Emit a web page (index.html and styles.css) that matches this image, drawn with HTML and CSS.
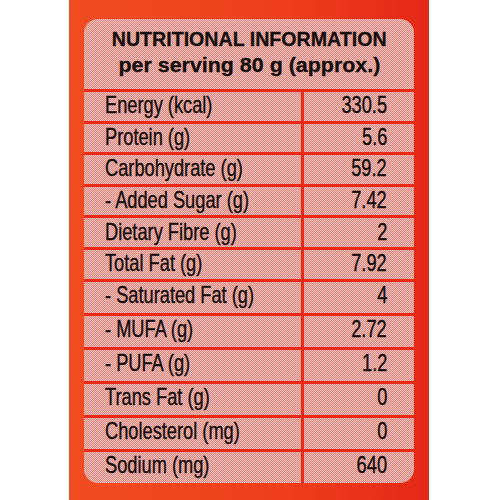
FILE: index.html
```html
<!DOCTYPE html>
<html lang="en">

<head>
  <meta charset="UTF-8">
  <meta name="viewport" content="width=device-width, initial-scale=1.0">
  <title>Nutritional Information</title>
  <link rel="stylesheet" href="styles.css">
</head>

<body>
  <div id="pack">
    <div class="label">
      <div class="label-head">
        <div class="title">NUTRITIONAL INFORMATION</div>
        <div class="subtitle">per serving 80 g (approx.)</div>
      </div>
      <div class="facts">
        <div class="row"><span class="name"><i>Energy (kcal)</i></span><span class="value"><i>330.5</i></span></div>
        <div class="row"><span class="name"><i>Protein (g)</i></span><span class="value"><i>5.6</i></span></div>
        <div class="row"><span class="name"><i>Carbohydrate (g)</i></span><span class="value"><i>59.2</i></span></div>
        <div class="row"><span class="name"><i>- Added Sugar (g)</i></span><span class="value"><i>7.42</i></span></div>
        <div class="row"><span class="name"><i>Dietary Fibre (g)</i></span><span class="value"><i>2</i></span></div>
        <div class="row"><span class="name"><i>Total Fat (g)</i></span><span class="value"><i>7.92</i></span></div>
        <div class="row tall"><span class="name"><i>- Saturated Fat (g)</i></span><span class="value"><i>4</i></span></div>
        <div class="row tall"><span class="name"><i>- MUFA (g)</i></span><span class="value"><i>2.72</i></span></div>
        <div class="row tall"><span class="name"><i>- PUFA (g)</i></span><span class="value"><i>1.2</i></span></div>
        <div class="row tall"><span class="name"><i>Trans Fat (g)</i></span><span class="value"><i>0</i></span></div>
        <div class="row tall"><span class="name"><i>Cholesterol (mg)</i></span><span class="value"><i>0</i></span></div>
        <div class="row tall"><span class="name"><i>Sodium (mg)</i></span><span class="value"><i>640</i></span></div>
      </div>
    </div>
  </div>
</body>

</html>
```

FILE: styles.css
```css
body {
  margin: 0;
  background: #fff;
  font-family: "Liberation Sans", Arial, sans-serif;
  color: #150e0c;
}

#pack {
  width: 360px;
  height: 500px;
  margin-left: 69px;
  padding: 19px 15px 17px;
  box-sizing: border-box;
  background: linear-gradient(to right, #f24c22, #ee3e1c 60%, #e42816);
}

.label {
  height: 100%;
  border-radius: 14px;
  overflow: hidden;
  background-color: #e7a39d;
  background-image: repeating-conic-gradient(#f2bcb4 0 25%, #dc8c86 0 50%);
  background-size: 2px 2px;
  display: flex;
  flex-direction: column;
}

.label-head {
  height: 70px;
  flex-shrink: 0;
  display: flex;
  flex-direction: column;
  align-items: center;
  justify-content: center;
  font-weight: bold;
  padding-bottom: 4px;
  box-sizing: border-box;
  -webkit-text-stroke: 0.3px currentColor;
}

.title {
  font-size: 20px;
  line-height: 26px;
  transform: scaleX(0.98);
}

.subtitle {
  font-size: 21px;
  line-height: 26px;
  transform: scaleX(1.02);
}

.facts {
  flex: 1;
  min-height: 0;
  display: flex;
  flex-direction: column;
}

.row {
  display: flex;
  height: 31.6px;
  flex-shrink: 0;
  box-sizing: border-box;
  border-top: 3px solid #ec2816;
  font-size: 24px;
  line-height: 1;
  white-space: nowrap;
  -webkit-text-stroke: 0.4px currentColor;
}

.row.tall {
  flex: 1 1 0;
  height: auto;
  min-height: 0;
}

.row.tall span {
  padding-bottom: 4px;
}

.row i {
  font-style: normal;
  display: inline-block;
  transform: scaleX(0.76);
}

.name {
  width: 220px;
  min-width: 0;
  flex-shrink: 0;
  padding: 0 0 2px 21px;
  box-sizing: border-box;
  border-right: 3px solid #ec2816;
  display: flex;
  align-items: center;
}

.name i {
  transform-origin: left center;
}

.value {
  flex: 1;
  min-width: 0;
  padding: 0 27px 2px 0;
  display: flex;
  align-items: center;
  justify-content: flex-end;
}

.value i {
  transform-origin: right center;
}
```
